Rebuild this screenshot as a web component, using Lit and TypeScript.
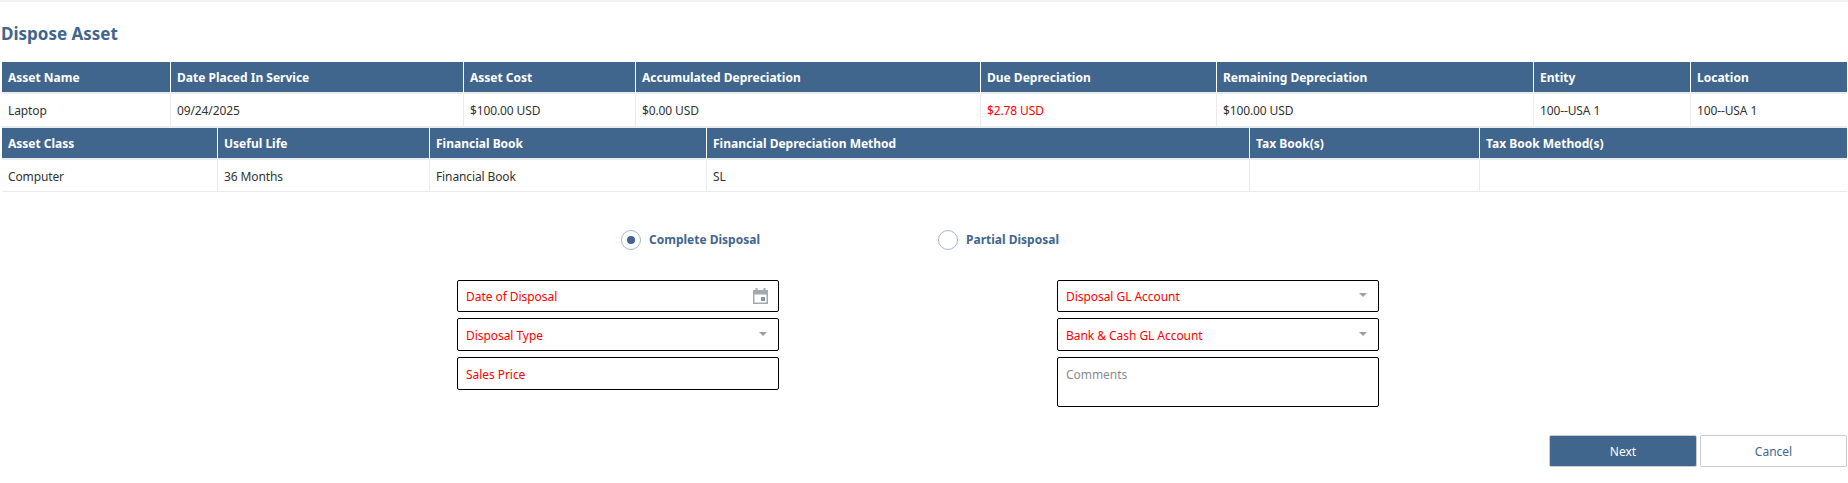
import { LitElement, html, css, svg } from "lit";
import { customElement } from "lit/decorators.js";

interface Col { head: string; value: string; width: number; alert?: boolean }

const TOP: Col[] = [
  { head: "Asset Name", value: "Laptop", width: 169 },
  { head: "Date Placed In Service", value: "09/24/2025", width: 293 },
  { head: "Asset Cost", value: "$100.00 USD", width: 172 },
  { head: "Accumulated Depreciation", value: "$0.00 USD", width: 345 },
  { head: "Due Depreciation", value: "$2.78 USD", width: 236, alert: true },
  { head: "Remaining Depreciation", value: "$100.00 USD", width: 317 },
  { head: "Entity", value: "100--USA 1", width: 157 },
  { head: "Location", value: "100--USA 1", width: 156 },
];
const BOTTOM: Col[] = [
  { head: "Asset Class", value: "Computer", width: 216 },
  { head: "Useful Life", value: "36 Months", width: 212 },
  { head: "Financial Book", value: "Financial Book", width: 277 },
  { head: "Financial Depreciation Method", value: "SL", width: 543 },
  { head: "Tax Book(s)", value: "", width: 230 },
  { head: "Tax Book Method(s)", value: "", width: 367 },
];

const caret = svg`<path d="M0 0h8L4 4z" fill="#9aa0a8"/>`;

@customElement("app-root")
export class AppRoot extends LitElement {
  static styles = css`
    :host { display: block; width: 1848px; height: 483px; background: #fff; overflow: hidden;
      font-family: "Noto Sans", "Open Sans", sans-serif; font-size: 12px; color: #333; }
    .strip { height: 2px; background: #eff3f3; }
    .page { padding: 0 1px 0 2px; }
    h1 { margin: 0 0 0 -1px; height: 60px; line-height: 64px; font-size: 17px; font-weight: 700; color: #41668d; }
    .tbl { display: grid; }
    .tbl + .tbl { border-top: 2px solid #e9ecef; }
    .th { height: 30px; line-height: 32px; background: #41668d; color: #fff; font-weight: 700;
      padding-left: 6px; border-right: 1px solid #fff; border-bottom: 2px solid #e9ecef; white-space: nowrap; }
    .th.end, .td.end { border-right: 0; }
    .td { height: 31px; line-height: 33px; padding-left: 6px; border-right: 1px solid #e9ecef;
      white-space: nowrap; letter-spacing: -0.12px; }
    .tbl + .tbl .td { border-bottom: 1px solid #e9ecef; }
    .tbl:first-of-type .td { height: 32px; }
    .alert { color: #f00; }
    .radios { display: flex; margin-top: 37px; padding-left: 619px; height: 22px; align-items: center; }
    .radio { display: flex; align-items: center; gap: 8px; font-weight: 700; color: #41668d; line-height: 20px; }
    .radio.first { width: 317px; }
    .dot { width: 18px; height: 18px; border: 1px solid #a6b8cd; border-radius: 50%; display: grid; place-items: center; flex: none; }
    .dot i { width: 8px; height: 8px; background: #41668d; border-radius: 50%; display: block; }
    .form { display: flex; gap: 278px; margin-top: 29px; padding-left: 455px; }
    .col { display: flex; flex-direction: column; gap: 6px; width: 322px; }
    .field { box-sizing: border-box; height: 33px; border: 1px solid #000; border-radius: 2px; padding: 2px 11px 0 8px; display: flex; align-items: center;
      justify-content: space-between; color: #f00; letter-spacing: -0.05px; }
    .field.short { height: 32px; padding: 0 10px 0 8px; }
    .field.short.sel { padding-right: 11px; }
    .field.area { height: 50px; align-items: flex-start; padding-top: 8px; color: #8c8c8c; }
    .caret { margin-top: -3px; }
    .short .caret { margin-top: -2px; }
    .actions { display: flex; justify-content: flex-end; gap: 3px; margin-top: 28px; }
    button { width: 148px; height: 32px; box-sizing: border-box; font: inherit; border: 1px solid #ccc; border-radius: 2px; padding: 0; }
    .next { background: #41668d; color: #fff; }
    .cancel { background: #fff; color: #41668d; width: 147px; }
  `;

  private table(cols: Col[]) {
    const template = cols.map((c) => `${c.width}px`).join(" ");
    return html`<div class="tbl" style="grid-template-columns:${template}">
      ${cols.map((c, i) => html`<div class="th ${i === cols.length - 1 ? "end" : ""}">${c.head}</div>`)}
      ${cols.map((c, i) => html`<div class="td ${c.alert ? "alert" : ""} ${i === cols.length - 1 ? "end" : ""}">${c.value}</div>`)}
    </div>`;
  }

  render() {
    const arrow = html`<svg class="caret" width="8" height="4" viewBox="0 0 8 4">${caret}</svg>`;
    return html`
      <div class="strip"></div>
      <div class="page">
        <h1>Dispose Asset</h1>
        ${this.table(TOP)}
        ${this.table(BOTTOM)}
        <div class="radios">
          <label class="radio first"><span class="dot"><i></i></span>Complete Disposal</label>
          <label class="radio"><span class="dot"></span>Partial Disposal</label>
        </div>
        <div class="form">
          <div class="col">
            <div class="field short">Date of Disposal
              <svg width="15" height="16" viewBox="0 0 15 16"><path fill="#a3a9b0" fill-rule="evenodd" d="M2.5 0h2v2h6V0h2v2H15v14H0V2h2.5zM1.5 6.5V14.5h12V6.5zM8 9h4v4H8z"/><rect x="8" y="9" width="4" height="4" fill="#8d949c"/></svg>
            </div>
            <div class="field">Disposal Type ${arrow}</div>
            <div class="field">Sales Price</div>
          </div>
          <div class="col">
            <div class="field short sel">Disposal GL Account ${arrow}</div>
            <div class="field">Bank &amp; Cash GL Account ${arrow}</div>
            <div class="field area">Comments</div>
          </div>
        </div>
        <div class="actions">
          <button class="next">Next</button>
          <button class="cancel">Cancel</button>
        </div>
      </div>
    `;
  }
}
